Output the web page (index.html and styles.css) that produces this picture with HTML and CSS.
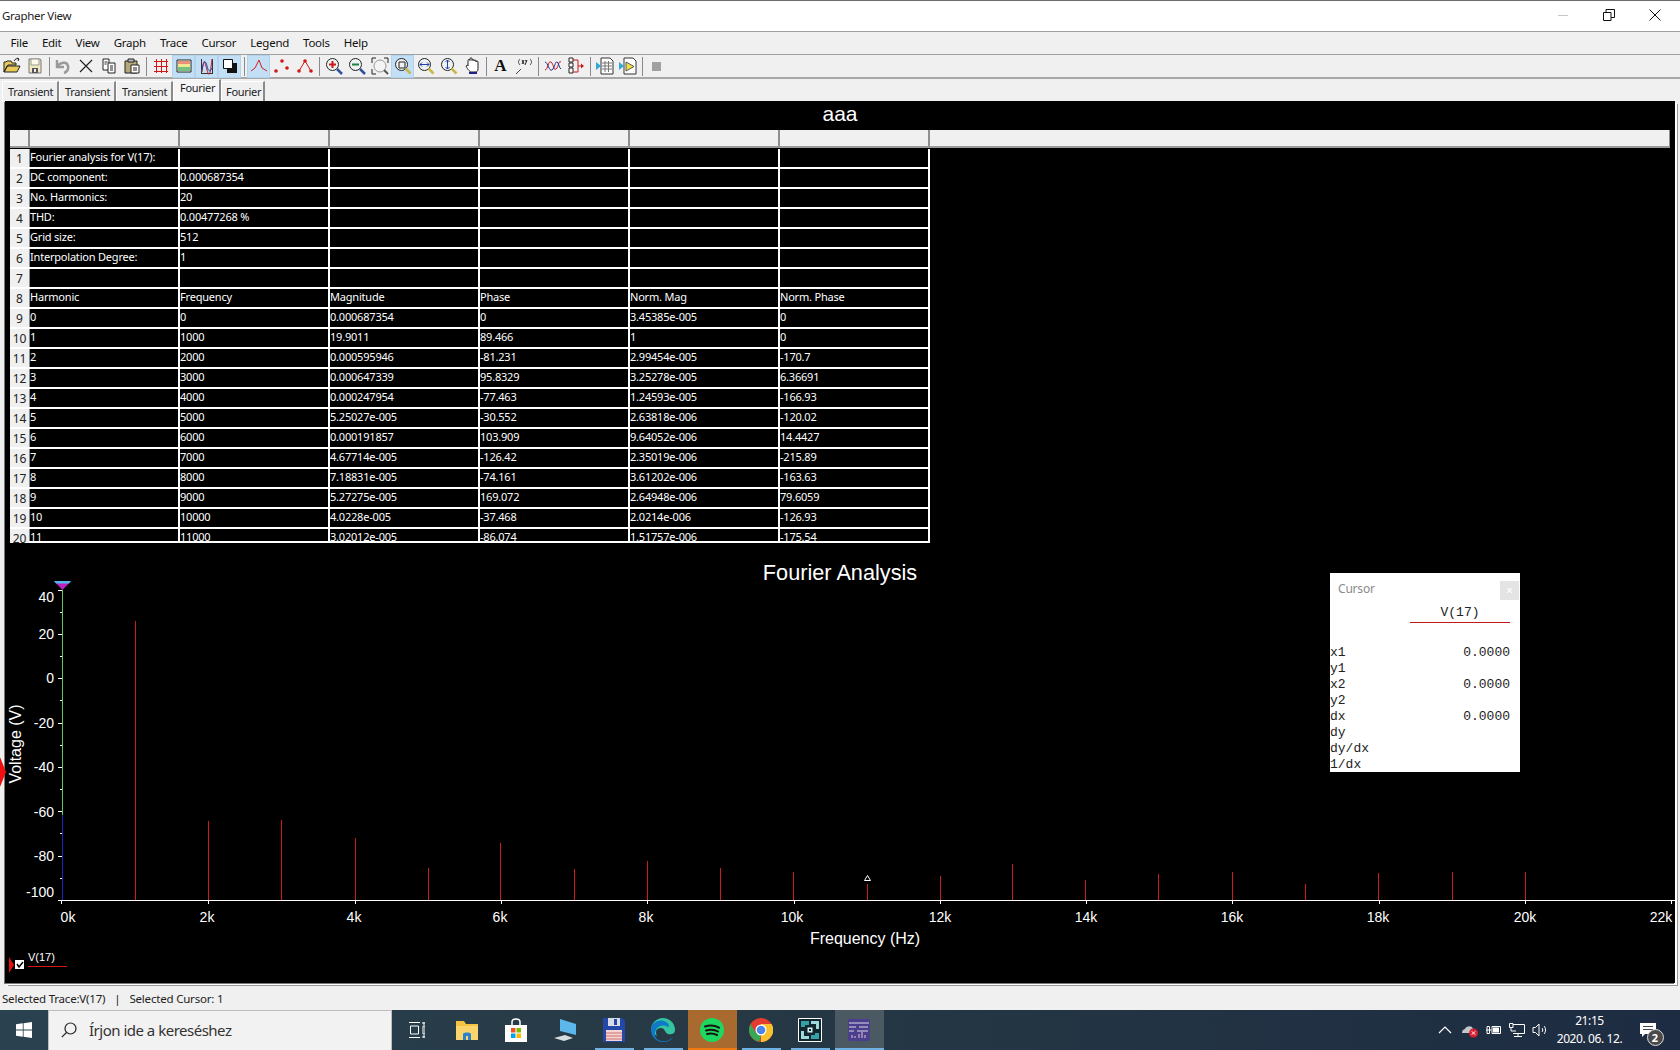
FILE: index.html
```html
<!DOCTYPE html>
<html lang="en">
<head>
<meta charset="utf-8">
<title>Grapher View</title>
<link rel="stylesheet" href="styles.css">
</head>
<body>
<div class="app">
  <header class="titlebar">
    <span class="title-text">Grapher View</span>
    <div class="win-btns">
      <svg class="win-ico" viewBox="0 0 12 12"><path d="M1 6.500h10" stroke="#c8c8c8" fill="none"/></svg>
      <svg class="win-ico" viewBox="0 0 12 12"><path d="M.5 3.500h7.500v8h-7.500zM3 3.500v-3h8.500v8h-3.500" stroke="#111" fill="none"/></svg>
      <svg class="win-ico" viewBox="0 0 12 12"><path d="M.5.500l11 11M11.500.500l-11 11" stroke="#111" fill="none"/></svg>
    </div>
  </header>
  <nav class="menubar">
    <span class="menu-item">File</span><span class="menu-item">Edit</span><span class="menu-item">View</span><span class="menu-item">Graph</span><span class="menu-item">Trace</span><span class="menu-item">Cursor</span><span class="menu-item">Legend</span><span class="menu-item">Tools</span><span class="menu-item">Help</span>
  </nav>
  <div class="toolbar">
    <span class="tb"><svg viewBox="0 0 18 18"><path d="M1 15V5h2l1-1h4l1 2h4v2H5L1 15l3-6h13l-3 6z" fill="#e8c95a" stroke="#222"/><path d="M11 4c1-2 3-3 5-2m0 0l-2-1m2 1l-1 2" stroke="#222" fill="none"/></svg></span>
    <span class="tb"><svg viewBox="0 0 18 18"><path d="M3 2h11l1 1v13H3z" fill="#efe8c0" stroke="#777"/><path d="M5 2h8v6H5z" fill="#fdfbe8" stroke="#999"/><path d="M6 11h6v5H6z" fill="#555"/><path d="M8 12h2v3H8z" fill="#eee"/></svg></span>
    <i class="tsep"></i>
    <span class="tb"><svg viewBox="0 0 18 18"><path d="M3 3v7h7M3 10c3-5 10-6 11-1 1 3-1 6-4 7" stroke="#9a9a9a" stroke-width="2.500" fill="none"/></svg></span>
    <span class="tb"><svg viewBox="0 0 18 18"><path d="M3 3l12 12M15 3L3 15" stroke="#222" stroke-width="1.200" fill="none"/></svg></span>
    <span class="tb"><svg viewBox="0 0 18 18"><path d="M3 2h6v11H3z" fill="#fff" stroke="#222"/><path d="M8 6h7v10H8z" fill="#fff" stroke="#222"/><path d="M10 9h3M10 11h3M10 13h3M4.500 5h3M4.500 7h2" stroke="#222"/></svg></span>
    <span class="tb"><svg viewBox="0 0 18 18"><path d="M2 4h12v12H2z" fill="#b5a878" stroke="#222"/><path d="M5 2h6v3H5z" fill="#bbb" stroke="#222"/><path d="M8 8h8v8H8z" fill="#fff" stroke="#222"/><path d="M10 11h4M10 13h4" stroke="#222"/></svg></span>
    <i class="tsep"></i>
    <span class="tb"><svg viewBox="0 0 18 18"><path d="M4.500 2v14M9.500 2v14M14.500 2v14M2 4.500h14M2 9.500h14M2 14.500h14" stroke="#d01818" fill="none"/></svg></span>
    <span class="tb on"><svg viewBox="0 0 18 18"><path d="M2 3h14v12H2z" fill="#fff" stroke="#222"/><path d="M3 4h12v3H3z" fill="#e8907a"/><path d="M3 7h12v3H3z" fill="#f0e890"/><path d="M3 10h12v4H3z" fill="#78c080"/></svg></span>
    <span class="tb on"><svg viewBox="0 0 18 18"><path d="M3.500 2v14M14.500 2v14M3 16.500h12" stroke="#333" fill="none"/><path d="M4 15C6-3 7 6 9 13s3 7 5-11" stroke="#c82020" fill="none"/><path d="M4 13C6 2 8 4 9 9s3 7 5 2" stroke="#2040a0" fill="none"/></svg></span>
    <span class="tb on"><svg viewBox="0 0 18 18"><path d="M6 6h10v10H6z" fill="#111"/><path d="M2.500 2.500h9v9h-9z" fill="#fff" stroke="#111"/></svg></span>
    <i class="tsep"></i>
    <span class="tb on"><svg viewBox="0 0 18 18"><path d="M1 14l4-3 4-8 3 8 5 3" stroke="#d02020" fill="none"/></svg></span>
    <span class="tb"><svg viewBox="0 0 18 18"><circle cx="3" cy="14" r="1.800" fill="#d01818"/><circle cx="9" cy="4" r="1.800" fill="#d01818"/><circle cx="14" cy="11" r="1.800" fill="#d01818"/></svg></span>
    <span class="tb"><svg viewBox="0 0 18 18"><path d="M3 14l6-10 6 10" stroke="#d01818" fill="none"/><circle cx="3" cy="14" r="1.800" fill="#d01818"/><circle cx="9" cy="4" r="1.800" fill="#d01818"/><circle cx="15" cy="14" r="1.800" fill="#d01818"/></svg></span>
    <i class="tsep"></i>
    <span class="tb"><svg viewBox="0 0 18 18"><circle cx="7.500" cy="7.500" r="6" fill="#eef2f2" stroke="#222"/><path d="M7.500 4v7M4 7.500h7" stroke="#c81818" stroke-width="2"/><path d="M12 12l5 5" stroke="#3050a0" stroke-width="2.500"/></svg></span>
    <span class="tb"><svg viewBox="0 0 18 18"><circle cx="7.500" cy="7.500" r="6" fill="#eef2f2" stroke="#222"/><path d="M4 7.500h7" stroke="#208040" stroke-width="2"/><path d="M12 12l5 5" stroke="#3050a0" stroke-width="2.500"/></svg></span>
    <span class="tb"><svg viewBox="0 0 18 18"><circle cx="9" cy="9" r="6" fill="#f4f4f4" stroke="#999"/><path d="M13 13l4 4" stroke="#555" stroke-width="2"/><path d="M1 6V1h4M17 6V1h-4M1 12v5h4" stroke="#222" fill="none"/></svg></span>
    <span class="tb on"><svg viewBox="0 0 18 18"><circle cx="7.500" cy="7.500" r="6" fill="#eef2f2" stroke="#222"/><path d="M5 5h6v6H5z" fill="none" stroke="#222"/><path d="M11.500 11.500l5 5" stroke="#c8b848" stroke-width="2.500"/></svg></span>
    <span class="tb"><svg viewBox="0 0 18 18"><circle cx="7.500" cy="7.500" r="6" fill="#eef2f2" stroke="#222"/><path d="M3 7.500h9M5 5.500l-2 2 2 2M10 5.500l2 2-2 2" stroke="#2040b0" fill="none"/><path d="M11.500 11.500l5 5" stroke="#c8b848" stroke-width="2.500"/></svg></span>
    <span class="tb"><svg viewBox="0 0 18 18"><circle cx="7.500" cy="7.500" r="6" fill="#eef2f2" stroke="#222"/><path d="M7.500 3v9M5.500 5l2-2 2 2M5.500 10l2 2 2-2" stroke="#2040b0" fill="none"/><path d="M11.500 11.500l5 5" stroke="#c8b848" stroke-width="2.500"/></svg></span>
    <span class="tb"><svg viewBox="0 0 18 18"><path d="M5 9V3.500a1 1 0 0 1 2 0V1.800a1 1 0 0 1 2 0v1.700a1 1 0 0 1 2 0V4a1 1 0 0 1 2 0v1a1 1 0 0 1 2 0v7c0 2-1 3-3 3H9c-2 0-4-2-6-6 1-1 2-1 2 0z" fill="#fff" stroke="#222"/><path d="M6 15h8v2H6z" fill="#20208a"/></svg></span>
    <i class="tsep"></i>
    <span class="tb tb-a">A</span>
    <span class="tb"><svg viewBox="0 0 18 18"><path d="M1 17l5-5" stroke="#444"/><path d="M5 2C3 4 3 6 5 8M15 2c2 2 2 4 0 6" stroke="#444" fill="none"/><path d="M7 3l2 4M9 3L7 7M12 3l-2 5M10.500 3l1 2" stroke="#222" fill="none"/></svg></span>
    <i class="tsep"></i>
    <span class="tb"><svg viewBox="0 0 18 18"><path d="M1 13c3 0 3-10 6-8s2 9 5 7 2-9 5-7" stroke="#c81818" fill="none"/><path d="M1 5c3 0 4 10 7 8s3-9 5-8 2 6 4 7" stroke="#2030a0" fill="none"/></svg></span>
    <span class="tb"><svg viewBox="0 0 18 18"><path d="M2 1h4v4H2zM2 6h4v4H2zM2 11h4v5H2z" fill="#fff" stroke="#222"/><path d="M6 3h5v12H6M11 9h3" stroke="#c81818" fill="none"/><path d="M14 6.500l3 2.500-3 2.500z" fill="#c81818"/></svg></span>
    <i class="tsep"></i>
    <span class="tb"><svg viewBox="0 0 18 18"><path d="M5 1h9l3 3v13H5z" fill="#fff" stroke="#333"/><path d="M6 6h10M6 9h10M6 12h10M9 4v11M12.500 4v11" stroke="#777"/><path d="M0 5l5 4-5 4z" fill="#30a8d8"/></svg></span>
    <span class="tb"><svg viewBox="0 0 18 18"><path d="M5 1h9l3 3v13H5z" fill="#fff" stroke="#333"/><path d="M7 5v9l8-4.500z" fill="#f0e040" stroke="#555"/><path d="M0 5l5 4-5 4z" fill="#30a8d8"/></svg></span>
    <i class="tsep"></i>
    <span class="tb"><i class="stop"></i></span>
  </div>
  <div class="tabs">
    <span class="tab">Transient</span><span class="tab">Transient</span><span class="tab">Transient</span><span class="tab tab-on">Fourier</span><span class="tab tab-last">Fourier</span>
  </div>
  <main class="panel">
    <div class="panel-title">aaa</div>
    <section class="grid">
      <div class="hrow"><span class="hn"></span><span class="hc"></span><span class="hc"></span><span class="hc"></span><span class="hc"></span><span class="hc"></span><span class="hc"></span><span class="hc hc-fill"></span></div>
      <div class="row"><span class="rn">1</span><span class="c">Fourier analysis for V(17):</span><span class="c"></span><span class="c"></span><span class="c"></span><span class="c"></span><span class="c"></span></div>
      <div class="row"><span class="rn">2</span><span class="c">DC component:</span><span class="c">0.000687354</span><span class="c"></span><span class="c"></span><span class="c"></span><span class="c"></span></div>
      <div class="row"><span class="rn">3</span><span class="c">No. Harmonics:</span><span class="c">20</span><span class="c"></span><span class="c"></span><span class="c"></span><span class="c"></span></div>
      <div class="row"><span class="rn">4</span><span class="c">THD:</span><span class="c">0.00477268 %</span><span class="c"></span><span class="c"></span><span class="c"></span><span class="c"></span></div>
      <div class="row"><span class="rn">5</span><span class="c">Grid size:</span><span class="c">512</span><span class="c"></span><span class="c"></span><span class="c"></span><span class="c"></span></div>
      <div class="row"><span class="rn">6</span><span class="c">Interpolation Degree:</span><span class="c">1</span><span class="c"></span><span class="c"></span><span class="c"></span><span class="c"></span></div>
      <div class="row"><span class="rn">7</span><span class="c"></span><span class="c"></span><span class="c"></span><span class="c"></span><span class="c"></span><span class="c"></span></div>
      <div class="row"><span class="rn">8</span><span class="c">Harmonic</span><span class="c">Frequency</span><span class="c">Magnitude</span><span class="c">Phase</span><span class="c">Norm. Mag</span><span class="c">Norm. Phase</span></div>
      <div class="row"><span class="rn">9</span><span class="c">0</span><span class="c">0</span><span class="c">0.000687354</span><span class="c">0</span><span class="c">3.45385e-005</span><span class="c">0</span></div>
      <div class="row"><span class="rn">10</span><span class="c">1</span><span class="c">1000</span><span class="c">19.9011</span><span class="c">89.466</span><span class="c">1</span><span class="c">0</span></div>
      <div class="row"><span class="rn">11</span><span class="c">2</span><span class="c">2000</span><span class="c">0.000595946</span><span class="c">-81.231</span><span class="c">2.99454e-005</span><span class="c">-170.7</span></div>
      <div class="row"><span class="rn">12</span><span class="c">3</span><span class="c">3000</span><span class="c">0.000647339</span><span class="c">95.8329</span><span class="c">3.25278e-005</span><span class="c">6.36691</span></div>
      <div class="row"><span class="rn">13</span><span class="c">4</span><span class="c">4000</span><span class="c">0.000247954</span><span class="c">-77.463</span><span class="c">1.24593e-005</span><span class="c">-166.93</span></div>
      <div class="row"><span class="rn">14</span><span class="c">5</span><span class="c">5000</span><span class="c">5.25027e-005</span><span class="c">-30.552</span><span class="c">2.63818e-006</span><span class="c">-120.02</span></div>
      <div class="row"><span class="rn">15</span><span class="c">6</span><span class="c">6000</span><span class="c">0.000191857</span><span class="c">103.909</span><span class="c">9.64052e-006</span><span class="c">14.4427</span></div>
      <div class="row"><span class="rn">16</span><span class="c">7</span><span class="c">7000</span><span class="c">4.67714e-005</span><span class="c">-126.42</span><span class="c">2.35019e-006</span><span class="c">-215.89</span></div>
      <div class="row"><span class="rn">17</span><span class="c">8</span><span class="c">8000</span><span class="c">7.18831e-005</span><span class="c">-74.161</span><span class="c">3.61202e-006</span><span class="c">-163.63</span></div>
      <div class="row"><span class="rn">18</span><span class="c">9</span><span class="c">9000</span><span class="c">5.27275e-005</span><span class="c">169.072</span><span class="c">2.64948e-006</span><span class="c">79.6059</span></div>
      <div class="row"><span class="rn">19</span><span class="c">10</span><span class="c">10000</span><span class="c">4.0228e-005</span><span class="c">-37.468</span><span class="c">2.0214e-006</span><span class="c">-126.93</span></div>
      <div class="row"><span class="rn">20</span><span class="c">11</span><span class="c">11000</span><span class="c">3.02012e-005</span><span class="c">-86.074</span><span class="c">1.51757e-006</span><span class="c">-175.54</span></div>
    </section>
    <svg class="chart" viewBox="5 543 1670 440">
      <text class="chart-title" x="840" y="580">Fourier Analysis</text>
      <path d="M62.500 590V815" stroke="#62c862" fill="none"/>
      <path d="M62.500 815V900" stroke="#1c24c0" fill="none"/>
      <path d="M62 900.500H1675" stroke="#fff" fill="none"/>
      <path d="M54 581h17l-8.500 9z" fill="#c020c0"/><path d="M54 581h17l-2 2.500H56z" fill="#50b8e8"/>
      <path d="M58 590.500h4M58 634.500h4M58 678.500h4M58 723.500h4M58 767.500h4M58 811.500h4M58 856.500h4M58 900.500h4M60 612.500h2M60 656.500h2M60 700.500h2M60 745.500h2M60 789.500h2M60 833.500h2M60 878.500h2" stroke="#fff" fill="none"/>
      <path d="M61.500 900v4M208.500 900v4M355.500 900v4M501.500 900v4M647.500 900v4M794.500 900v4M940.500 900v4M1086.500 900v4M1232.500 900v4M1379.500 900v4M1525.500 900v4M1671.500 900v4" stroke="#fff" fill="none"/>
      <g class="bars">
        <path d="M135.500 621V900M208.500 821V900M281.500 820V900M355.500 838V900M428.500 868V900M500.500 843V900M574.500 869V900M647.500 861V900M720.500 868V900M793.500 872V900M867.500 884V900M940.500 876V900M1012.500 864V900M1085.500 880V900M1158.500 874V900M1232.500 872V900M1305.500 884V900M1378.500 873V900M1452.500 872V900M1525.500 872V900"/>
      </g>
      <path d="M867.500 875.500l3 5h-6z" fill="none" stroke="#fff"/>
      <g class="ylabels">
        <text x="54" y="602">40</text><text x="54" y="639">20</text><text x="54" y="683">0</text><text x="54" y="728">-20</text><text x="54" y="772">-40</text><text x="54" y="817">-60</text><text x="54" y="861">-80</text><text x="54" y="897">-100</text>
      </g>
      <g class="xlabels">
        <text x="68" y="922">0k</text><text x="207" y="922">2k</text><text x="354" y="922">4k</text><text x="500" y="922">6k</text><text x="646" y="922">8k</text><text x="792" y="922">10k</text><text x="940" y="922">12k</text><text x="1086" y="922">14k</text><text x="1232" y="922">16k</text><text x="1378" y="922">18k</text><text x="1525" y="922">20k</text><text x="1661" y="922">22k</text>
      </g>
      <text class="axis-label" x="865" y="944">Frequency (Hz)</text>
      <text class="axis-label" transform="translate(21 744) rotate(-90)">Voltage (V)</text>
      <path d="M9 957l5 8-5 8z" fill="#e01010"/>
      <rect x="15" y="960" width="9" height="9" fill="#fff"/>
      <path d="M17 964l2 3 4-5" stroke="#000" stroke-width="1.500" fill="none"/>
      <text class="legend-text" x="28" y="961">V(17)</text>
      <path d="M28 966.500h39" stroke="#d01818" fill="none"/>
    </svg>
    <svg class="edge-mark" viewBox="0 0 6 30"><path d="M0 0l6 15-6 15z" fill="#ee1010"/></svg>
    <aside class="cursor-win">
      <div class="cw-head"><span class="cw-title">Cursor</span><span class="cw-close">×</span></div>
      <div class="cw-trace">V(17)</div>
      <div class="cw-rows">
        <div class="cw-row"><span>x1</span><span>0.0000</span></div>
        <div class="cw-row"><span>y1</span></div>
        <div class="cw-row"><span>x2</span><span>0.0000</span></div>
        <div class="cw-row"><span>y2</span></div>
        <div class="cw-row"><span>dx</span><span>0.0000</span></div>
        <div class="cw-row"><span>dy</span></div>
        <div class="cw-row"><span>dy/dx</span></div>
        <div class="cw-row"><span>1/dx</span></div>
      </div>
    </aside>
  </main>
  <footer class="statusbar"><span>Selected Trace:V(17)</span><span class="st-sep">|</span><span>Selected Cursor: 1</span></footer>
  <div class="taskbar">
    <span class="start"><svg viewBox="0 0 16 16" class="i16"><path d="M0 2.300l6.800-1V7.600H0zM7.600 1.200L16 0v7.600H7.600zM0 8.400h6.800v6.300l-6.800-1zM7.600 8.400H16V16l-8.400-1.200z" fill="#fff"/></svg></span>
    <div class="search">
      <svg viewBox="0 0 16 16" class="i16"><circle cx="9.500" cy="6.500" r="5.500" fill="none" stroke="#222" stroke-width="1.200"/><path d="M5.500 10.500L.8 15.200" stroke="#222" stroke-width="1.200"/></svg>
      <span>Írjon ide a kereséshez</span>
    </div>
    <span class="slot slot-tv"><svg viewBox="0 0 16 16" class="i16"><path d="M0 .5h11M0 15.500h11M1.500 4h8v8h-8zM14 0h2v2h-2zM14 4h2v8h-2zM14 14h2v2h-2z" stroke="#fff" fill="none"/></svg></span>
    <span class="slot"><svg viewBox="0 0 24 24" class="i24"><path d="M1 3h8l2 3h12v16H1z" fill="#f5c242"/><path d="M1 8h22v14H1z" fill="#fbd56b"/><path d="M8 22v-6c0-2 8-2 8 0v6h-3v-4h-2v4z" fill="#2a82cc"/></svg></span>
    <span class="slot"><svg viewBox="0 0 24 24" class="i24"><path d="M1 7h22v17H1z" fill="#fff"/><path d="M8 7V4c0-4 8-4 8 0v3" stroke="#fff" fill="none" stroke-width="1.500"/><path d="M7 10h4.500v4.500H7z" fill="#f25022"/><path d="M12.500 10H17v4.500h-4.500z" fill="#7fba00"/><path d="M7 15.500h4.500V20H7z" fill="#00a4ef"/><path d="M12.500 15.500H17V20h-4.500z" fill="#ffb900"/></svg></span>
    <span class="slot"><svg viewBox="0 0 24 24" class="i24"><path d="M7 1l16 5v11L7 13z" fill="#5cb8ea"/><path d="M1 20l11-3 8 3-9 3z" fill="#d8dde0"/></svg></span>
    <span class="slot slot-run"><svg viewBox="0 0 24 24" class="i24"><path d="M1 0h19l3 3v21H1z" fill="#2348a8"/><path d="M6 0h12v8H6z" fill="#d8dce8"/><path d="M12 1h3v6h-3z" fill="#2348a8"/><path d="M4 12h16v11H4z" fill="#f6d4d4"/><path d="M4 15h16M4 18h16M4 21h16" stroke="#d07070"/></svg></span>
    <span class="slot slot-run"><svg viewBox="0 0 24 24" class="i24"><path d="M12 0a12 12 0 0 1 12 12c0 4-4 5-7 4s-3-6-7-6C5 10 4 14 6 18c-3-2-6-5-6-6A12 12 0 0 1 12 0z" fill="#35c4a0"/><path d="M0 12c0-6 6-11 13-9 5 2 6 5 4 6-4-3-12-2-13 6-1 6 5 9 11 8 2 0 5-2 7-4-2 4-6 5-10 5A12 12 0 0 1 0 12z" fill="#0f78c8"/></svg></span>
    <span class="slot slot-sp"><svg viewBox="0 0 24 24" class="i24"><circle cx="12" cy="12" r="12" fill="#1ed760"/><path d="M5 8.500c5-1.500 10-1 14 1.200M6 12.500c4-1 9-.7 12 1M7 16c3.500-.8 7-.5 10 1" stroke="#191414" stroke-width="2" fill="none" stroke-linecap="round"/></svg></span>
    <span class="slot slot-run"><svg viewBox="0 0 24 24" class="i24"><circle cx="12" cy="12" r="12" fill="#e33b2e"/><path d="M12 6h10.600A12 12 0 0 1 12 24z" fill="#fbc02d"/><path d="M1.600 6L7 15l5 3-2 5.800A12 12 0 0 1 1.600 6z" fill="#37a853"/><circle cx="12" cy="12" r="5.500" fill="#fff"/><circle cx="12" cy="12" r="4.300" fill="#4a85ec"/></svg></span>
    <span class="slot slot-run"><svg viewBox="0 0 24 24" class="i24"><path d="M.5.500h23v23H.5z" fill="#12262e" stroke="#fff"/><path d="M3 9V3h8v4H7v2zM21 15v6h-8v-4h4v-2z" fill="#35a0a8"/><path d="M13 3h8v8h-3V6h-5zM11 21H3v-8h3v5h5z" fill="#9fd8dc"/><path d="M9.500 9.500h5v5h-5z" fill="#d8f0f0"/><path d="M11 11h2v2h-2z" fill="#12262e"/></svg></span>
    <span class="slot slot-act"><svg viewBox="0 0 24 24" class="i24"><rect width="22" height="22" x="1" y="1" rx="2" fill="#4a3f8c"/><path d="M2 5h20M2 9h7M12 9h9M2 13h5M10 13h11" stroke="#ddd8e8" fill="none"/><path d="M12 20v-4M15 20v-6M18 20v-3M5 20v-3M8 20v-2" stroke="#e8c0d8" fill="none"/></svg></span>
    <div class="tray">
      <svg viewBox="0 0 14 8" class="t-chev"><path d="M1 7l6-6 6 6" stroke="#fff" fill="none" stroke-width="1.200"/></svg>
      <svg viewBox="0 0 18 16" class="t-cloud"><path d="M1 11c0-3 2-4 3-4 1-3 7-4 8 0 3 0 4 2 4 4H1z" fill="#c4c8cc"/><circle cx="12.500" cy="11" r="4.500" fill="#d82030"/><path d="M10.800 9.300l3.400 3.400m0-3.400l-3.400 3.400" stroke="#fff"/></svg>
      <svg viewBox="0 0 16 12" class="t-ico"><path d="M0 6h3M1 2.500h2.500v7H1zM3.500 6h2" stroke="#fff" fill="none"/><path d="M6 2.500h8.500v7H6z" stroke="#fff" fill="none"/><path d="M7 3.500h6v5H7z" fill="#fff"/></svg>
      <svg viewBox="0 0 16 14" class="t-ico"><path d="M.5.500h3.500v4H.5zM4 1.500h11.500v9H4M9 10.500v3M5 13.500h8M2 4.500V8h5" stroke="#fff" fill="none"/></svg>
      <svg viewBox="0 0 16 14" class="t-ico"><path d="M1 4.500h2.500L7 1v12L3.500 9.500H1zM10 5c1 1 1 3 0 4M12 3c2 2 2 6 0 8" stroke="#fff" fill="none"/></svg>
      <div class="clock"><span>21:15</span><span>2020. 06. 12.</span></div>
      <span class="notif"><svg viewBox="0 0 16 14" class="t-notif"><path d="M0 0h16v11H5L2 14v-3H0z" fill="#fff"/><path d="M3 3.500h10M3 6.500h10" stroke="#444"/></svg><b class="notif-badge">2</b></span>
    </div>
  </div>
</div>
</body>
</html>
```
FILE: styles.css
```css
* { box-sizing: border-box; }
html, body { margin: 0; padding: 0; height: 100%; overflow: hidden; }
body { font-family: "Noto Sans", "Liberation Sans", sans-serif; color: #111; background: #f0f0f0; }
.app { display: flex; flex-direction: column; width: 1680px; height: 1050px; }

.titlebar { height: 32px; flex: none; background: #fff; border-top: 1px solid #6e6e6e; border-bottom: 1px solid #a0a0a0; display: flex; align-items: center; justify-content: space-between; padding: 0 0 2px 2px; }
.title-text { font-size: 11.5px; letter-spacing: -0.3px; color: #222; }
.win-btns { display: flex; gap: 34px; padding-right: 19px; }
.win-ico { width: 12px; height: 12px; display: block; }

.menubar { height: 23px; flex: none; display: flex; align-items: center; background: #f0f0f0; border-bottom: 1px solid #a0a0a0; padding: 0 0 2px 3.5px; font-size: 11.5px; letter-spacing: -0.25px; }
.menu-item { padding: 0 7px; color: #111; }

.toolbar { height: 24px; flex: none; display: flex; align-items: center; background: #f0f0f0; border-bottom: 2px solid #a8a8a8; }
.tb { width: 23px; height: 23px; display: flex; align-items: center; justify-content: center; flex: none; }
.tb svg { width: 18px; height: 18px; display: block; }
.tb.on { background: #c2dff5; border: 1px solid #b0d4ee; }
.tb-a { font-family: "Liberation Serif", serif; font-weight: 700; font-size: 17px; color: #111; }
.tsep { width: 1px; height: 19px; margin: 0 2.5px; background: #8a8a8a; flex: none; }
.tsep:first-of-type { margin-right: 1.5px; }
.stop { width: 9px; height: 9px; background: #a0a0a0; display: block; }

.tabs { height: 22px; flex: none; display: flex; align-items: flex-end; background: #f0f0f0; padding-left: 2px; font-size: 11px; letter-spacing: -0.3px; }
.tab { width: 57px; height: 20px; line-height: 19px; padding: 0 0 0 5px; border-right: 2px solid #8a8a8a; border-top: 1px solid #fff; border-left: 1px solid #fff; color: #222; white-space: nowrap; }
.tab-on { width: 48px; height: 22px; line-height: 15px; background: #f5f5f5; padding: 0 0 4px 6px; }
.tab-last { width: 44px; padding: 0 0 0 4px; }

.panel { position: relative; flex: none; height: 882px; margin: 0 5px 0 5px; background: #000; box-shadow: -1px 1px 0 #777, 2px 2px 0 #fff, 3px 3px 0 #999; }
.panel-title { height: 29px; line-height: 25px; text-align: center; color: #fff; font-family: "Liberation Sans", sans-serif; font-size: 21px; }

.grid { position: relative; margin-left: 5px; width: 1660px; height: 413px; overflow: hidden; font-size: 11px; letter-spacing: -0.2px; font-family: "Noto Sans", sans-serif; }
.grid::after { content: ""; position: absolute; left: 19px; width: 901px; bottom: 0; height: 2px; background: #fff; }
.hrow { display: flex; height: 19px; background: #000; padding-bottom: 1px; }
.hn, .hc { background: #f0f0f0; border-right: 2px solid #8f8f8f; border-bottom: 2px solid #9a9a9a; }
.hn { width: 20px; flex: none; }
.hc { width: 150px; flex: none; }
.hc-fill { flex: 1; border-right: 1px solid #8f8f8f; }
.row { display: flex; width: 920px; height: 20px; background: #fff; padding-bottom: 2px; }
.rn { width: 20px; flex: none; background: #f0f0f0; border-right: 1px solid #8f8f8f; color: #222; text-align: center; line-height: 19px; font-size: 12px; letter-spacing: 0; }
.c { width: 148px; flex: none; margin-right: 2px; background: #000; color: #fff; line-height: 15px; white-space: nowrap; overflow: hidden; }
.c:last-child { margin-right: 0; }

.chart { display: block; width: 1670px; height: 440px; font-family: "Liberation Sans", sans-serif; }
.chart-title { fill: #fff; font-size: 21.7px; text-anchor: middle; }
.bars path { stroke: #cc1c1c; fill: none; }
.ylabels text { fill: #fff; font-size: 14px; text-anchor: end; }
.xlabels text { fill: #fff; font-size: 14px; text-anchor: middle; }
.axis-label { fill: #fff; font-size: 16px; text-anchor: middle; }
.legend-text { fill: #fff; font-size: 11px; }

.edge-mark { position: absolute; left: -5px; top: 656px; width: 6px; height: 30px; }

.cursor-win { position: absolute; left: 1325px; top: 472px; width: 190px; height: 199px; background: #fff; font-family: "Liberation Mono", monospace; font-size: 13px; color: #222; }
.cw-head { display: flex; justify-content: space-between; align-items: flex-start; height: 27px; padding: 8px 1px 0 8px; }
.cw-title { font-family: "Noto Sans", sans-serif; font-size: 12px; letter-spacing: -0.2px; color: #8a8a8a; line-height: 16px; }
.cw-close { width: 19px; height: 19px; background: #e4e4e4; color: #fff; text-align: center; line-height: 19px; font-family: "Noto Sans", sans-serif; font-size: 12px; }
.cw-trace { width: 100px; margin-left: 80px; height: 18px; line-height: 16px; text-align: center; border-bottom: 1px solid #c01818; margin-top: 5px; }
.cw-rows { margin-top: 22px; padding-right: 10px; }
.cw-row { display: flex; justify-content: space-between; height: 16px; line-height: 16px; }

.statusbar { flex: none; height: 27px; display: flex; align-items: center; background: #f0f0f0; font-size: 11.5px; letter-spacing: -0.2px; padding: 3px 0 0 2px; color: #222; }
.st-sep { margin: 0 9px 0 9px; }

.taskbar { flex: none; height: 40px; display: flex; align-items: center; background: linear-gradient(90deg, #2a4250 0%, #263844 45%, #1d2c42 100%); }
.start { width: 48px; height: 40px; display: flex; align-items: center; justify-content: center; }
.i16 { width: 16px; height: 16px; display: block; }
.i24 { width: 24px; height: 24px; display: block; }
.search { width: 344px; height: 40px; background: #f2f2f2; border: 1px solid #bdbdbd; border-width: 1px 1px 0; display: flex; align-items: center; padding: 0 0 2px 12px; gap: 12px; font-size: 15px; letter-spacing: -0.5px; color: #333; }
.slot { width: 49px; height: 40px; display: flex; align-items: center; justify-content: center; flex: none; position: relative; }
.slot-tv { width: 50.5px; }
.slot-run::after { content: ""; position: absolute; left: 5px; right: 5px; bottom: 0; height: 2px; background: #6fb1e4; }
.slot-sp { background: #a96a30; }
.slot-sp::after { content: ""; position: absolute; left: 0; right: 0; bottom: 0; height: 2px; background: #f07a10; }
.slot-act { background: #4b5963; }
.slot-act::after { content: ""; position: absolute; left: 0; right: 0; bottom: 0; height: 2px; background: #6fb1e4; }
.tray { flex: 1; display: flex; align-items: center; height: 40px; color: #fff; padding-left: 554px; }
.t-chev { width: 14px; height: 8px; flex: none; }
.t-cloud { width: 18px; height: 16px; margin-left: 9px; flex: none; }
.t-ico { width: 16px; height: 14px; margin-left: 7px; flex: none; }
.clock { width: 84px; display: flex; flex-direction: column; align-items: center; font-size: 12px; letter-spacing: -0.4px; line-height: 18px; flex: none; }
.notif { position: relative; margin-left: 8px; width: 24px; height: 24px; }
.t-notif { width: 16px; height: 14px; display: block; margin-top: 5px; }
.notif-badge { position: absolute; left: 7px; top: 11px; width: 17px; height: 17px; border-radius: 50%; background: #4a4a4a; border: 1px solid #ddd; color: #fff; font-size: 11px; font-weight: 700; text-align: center; line-height: 15px; }
```
